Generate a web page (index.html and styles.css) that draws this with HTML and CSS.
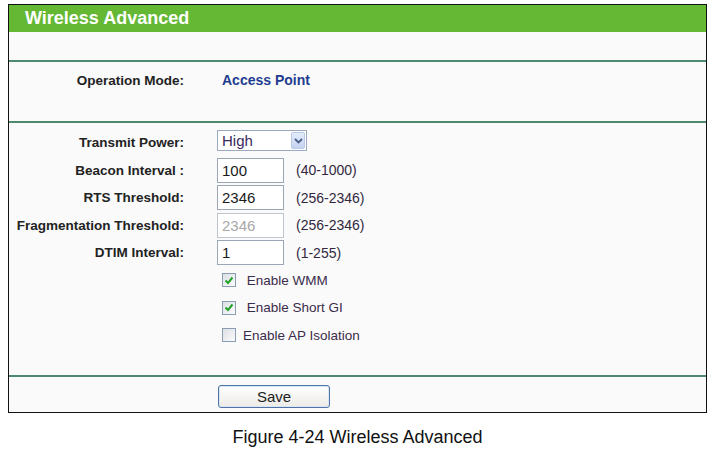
FILE: index.html
```html
<!DOCTYPE html>
<html>
<head>
<meta charset="utf-8">
<link rel="stylesheet" href="styles.css">
</head>
<body>
<div class="page">
  <div class="frame">
    <div class="title">Wireless Advanced</div>
    <div class="blank"></div>
    <div class="section opmode">
      <div class="grid">
        <div class="label">Operation Mode:</div>
        <div class="value">Access Point</div>
      </div>
    </div>
    <div class="section settings">
      <div class="grid rows">
        <div class="label">Transmit Power:</div>
        <div class="ctrl top">
          <div class="select">
            <span class="sel-text">High</span>
            <span class="sel-btn"><svg width="9" height="6" viewBox="0 0 9 6"><path d="M1 1 L4.5 4.5 L8 1" fill="none" stroke="#4a5f88" stroke-width="1.8"/></svg></span>
          </div>
        </div>

        <div class="label">Beacon Interval :</div>
        <div class="ctrl"><div class="input">100</div><span class="hint">(40-1000)</span></div>

        <div class="label">RTS Threshold:</div>
        <div class="ctrl"><div class="input">2346</div><span class="hint">(256-2346)</span></div>

        <div class="label">Fragmentation Threshold:</div>
        <div class="ctrl"><div class="input disabled">2346</div><span class="hint">(256-2346)</span></div>

        <div class="label">DTIM Interval:</div>
        <div class="ctrl"><div class="input">1</div><span class="hint">(1-255)</span></div>

        <div class="label"></div>
        <div class="ctrl check"><span class="box"><svg width="10" height="9" viewBox="0 0 10 9"><path d="M1.5 4.5 L4 7 L8.5 1.5" fill="none" stroke="#21a32a" stroke-width="2"/></svg></span><span class="ctext">&nbsp;Enable WMM</span></div>

        <div class="label"></div>
        <div class="ctrl check"><span class="box"><svg width="10" height="9" viewBox="0 0 10 9"><path d="M1.5 4.5 L4 7 L8.5 1.5" fill="none" stroke="#21a32a" stroke-width="2"/></svg></span><span class="ctext">&nbsp;Enable Short GI</span></div>

        <div class="label"></div>
        <div class="ctrl check"><span class="box"></span><span class="ctext">Enable AP Isolation</span></div>
      </div>
    </div>
    <div class="section actions">
      <div class="button">Save</div>
    </div>
  </div>
  <div class="caption">Figure 4-24 Wireless Advanced</div>
</div>
</body>
</html>
```

FILE: styles.css
```css
html, body {
  margin: 0;
  padding: 0;
  background: #ffffff;
}
body {
  font-family: "Liberation Sans", Arial, sans-serif;
  width: 718px;
  height: 453px;
  overflow: hidden;
}
.page {
  padding-top: 4px;
  padding-left: 8px;
}
.frame {
  width: 699px;
  box-sizing: border-box;
  border: 1px solid #111;
  background: #fafafa;
  display: flex;
  flex-direction: column;
}
.title {
  height: 27px;
  line-height: 27px;
  background: #64b833;
  color: #ffffff;
  font-weight: bold;
  font-size: 18px;
  padding-left: 16px;
}
.blank {
  height: 28px;
}
.section {
  border-top: 2px solid #4f8a70;
  box-sizing: border-box;
}
.grid {
  display: grid;
  grid-template-columns: 175px 1fr;
  column-gap: 33px;
}
.label {
  text-align: right;
  font-weight: bold;
  font-size: 13.5px;
  color: #222;
  display: flex;
  align-items: center;
  justify-content: flex-end;
  white-space: nowrap;
}
.opmode {
  height: 61px;
  padding-top: 8px;
}
.opmode .grid {
  grid-auto-rows: 20px;
}
.value {
  display: flex;
  align-items: center;
  padding-left: 5px;
  font-weight: bold;
  font-size: 14px;
  color: #1f3d8f;
}
.settings {
  height: 254px;
  padding-top: 7px;
}
.rows {
  grid-auto-rows: 25px;
  row-gap: 2.5px;
}
.ctrl {
  display: flex;
  align-items: center;
}
.ctrl.top {
  align-items: flex-start;
}
.select {
  width: 90px;
  height: 21px;
  box-sizing: border-box;
  border: 1px solid #9aa9bd;
  background: #fff;
  display: flex;
  align-items: center;
  justify-content: space-between;
  padding: 1px 1px 1px 4px;
}
.sel-text {
  font-size: 15px;
  color: #3a2a5c;
}
.sel-btn {
  width: 14px;
  height: 17px;
  box-sizing: border-box;
  border: 1px solid #b9c9e6;
  border-radius: 2px;
  background: linear-gradient(#e4ecfb, #c3d3f1);
  display: flex;
  align-items: center;
  justify-content: center;
}
.input {
  width: 67px;
  height: 25px;
  box-sizing: border-box;
  border: 1px solid #9ba7b6;
  background: #fff;
  font-size: 15px;
  color: #1a1a1a;
  padding-left: 4px;
  display: flex;
  align-items: center;
}
.input.disabled {
  color: #a8a8a8;
  border-color: #bfc6cf;
}
.hint {
  margin-left: 12px;
  font-size: 14px;
  color: #33283f;
}
.check {
  padding-left: 5px;
}
.box {
  width: 14px;
  height: 14px;
  box-sizing: border-box;
  border: 1px solid #8b9db3;
  background: linear-gradient(135deg, #dcdfe4, #fbfbfc);
  display: flex;
  align-items: center;
  justify-content: center;
}
.ctext {
  margin-left: 7px;
  font-size: 13.5px;
  color: #3a2c4c;
}
.actions {
  height: 37px;
  padding-top: 8px;
  padding-left: 209px;
}
.button {
  width: 112px;
  height: 23px;
  box-sizing: border-box;
  border: 1px solid #4f73a8;
  border-radius: 3px;
  background: linear-gradient(#ffffff, #ecebe6);
  box-shadow: inset 0 0 0 1px #dbe6f5;
  font-size: 15px;
  color: #222;
  display: flex;
  align-items: center;
  justify-content: center;
}
.caption {
  width: 699px;
  text-align: center;
  font-size: 18px;
  color: #111;
  margin-top: 14px;
}
```
